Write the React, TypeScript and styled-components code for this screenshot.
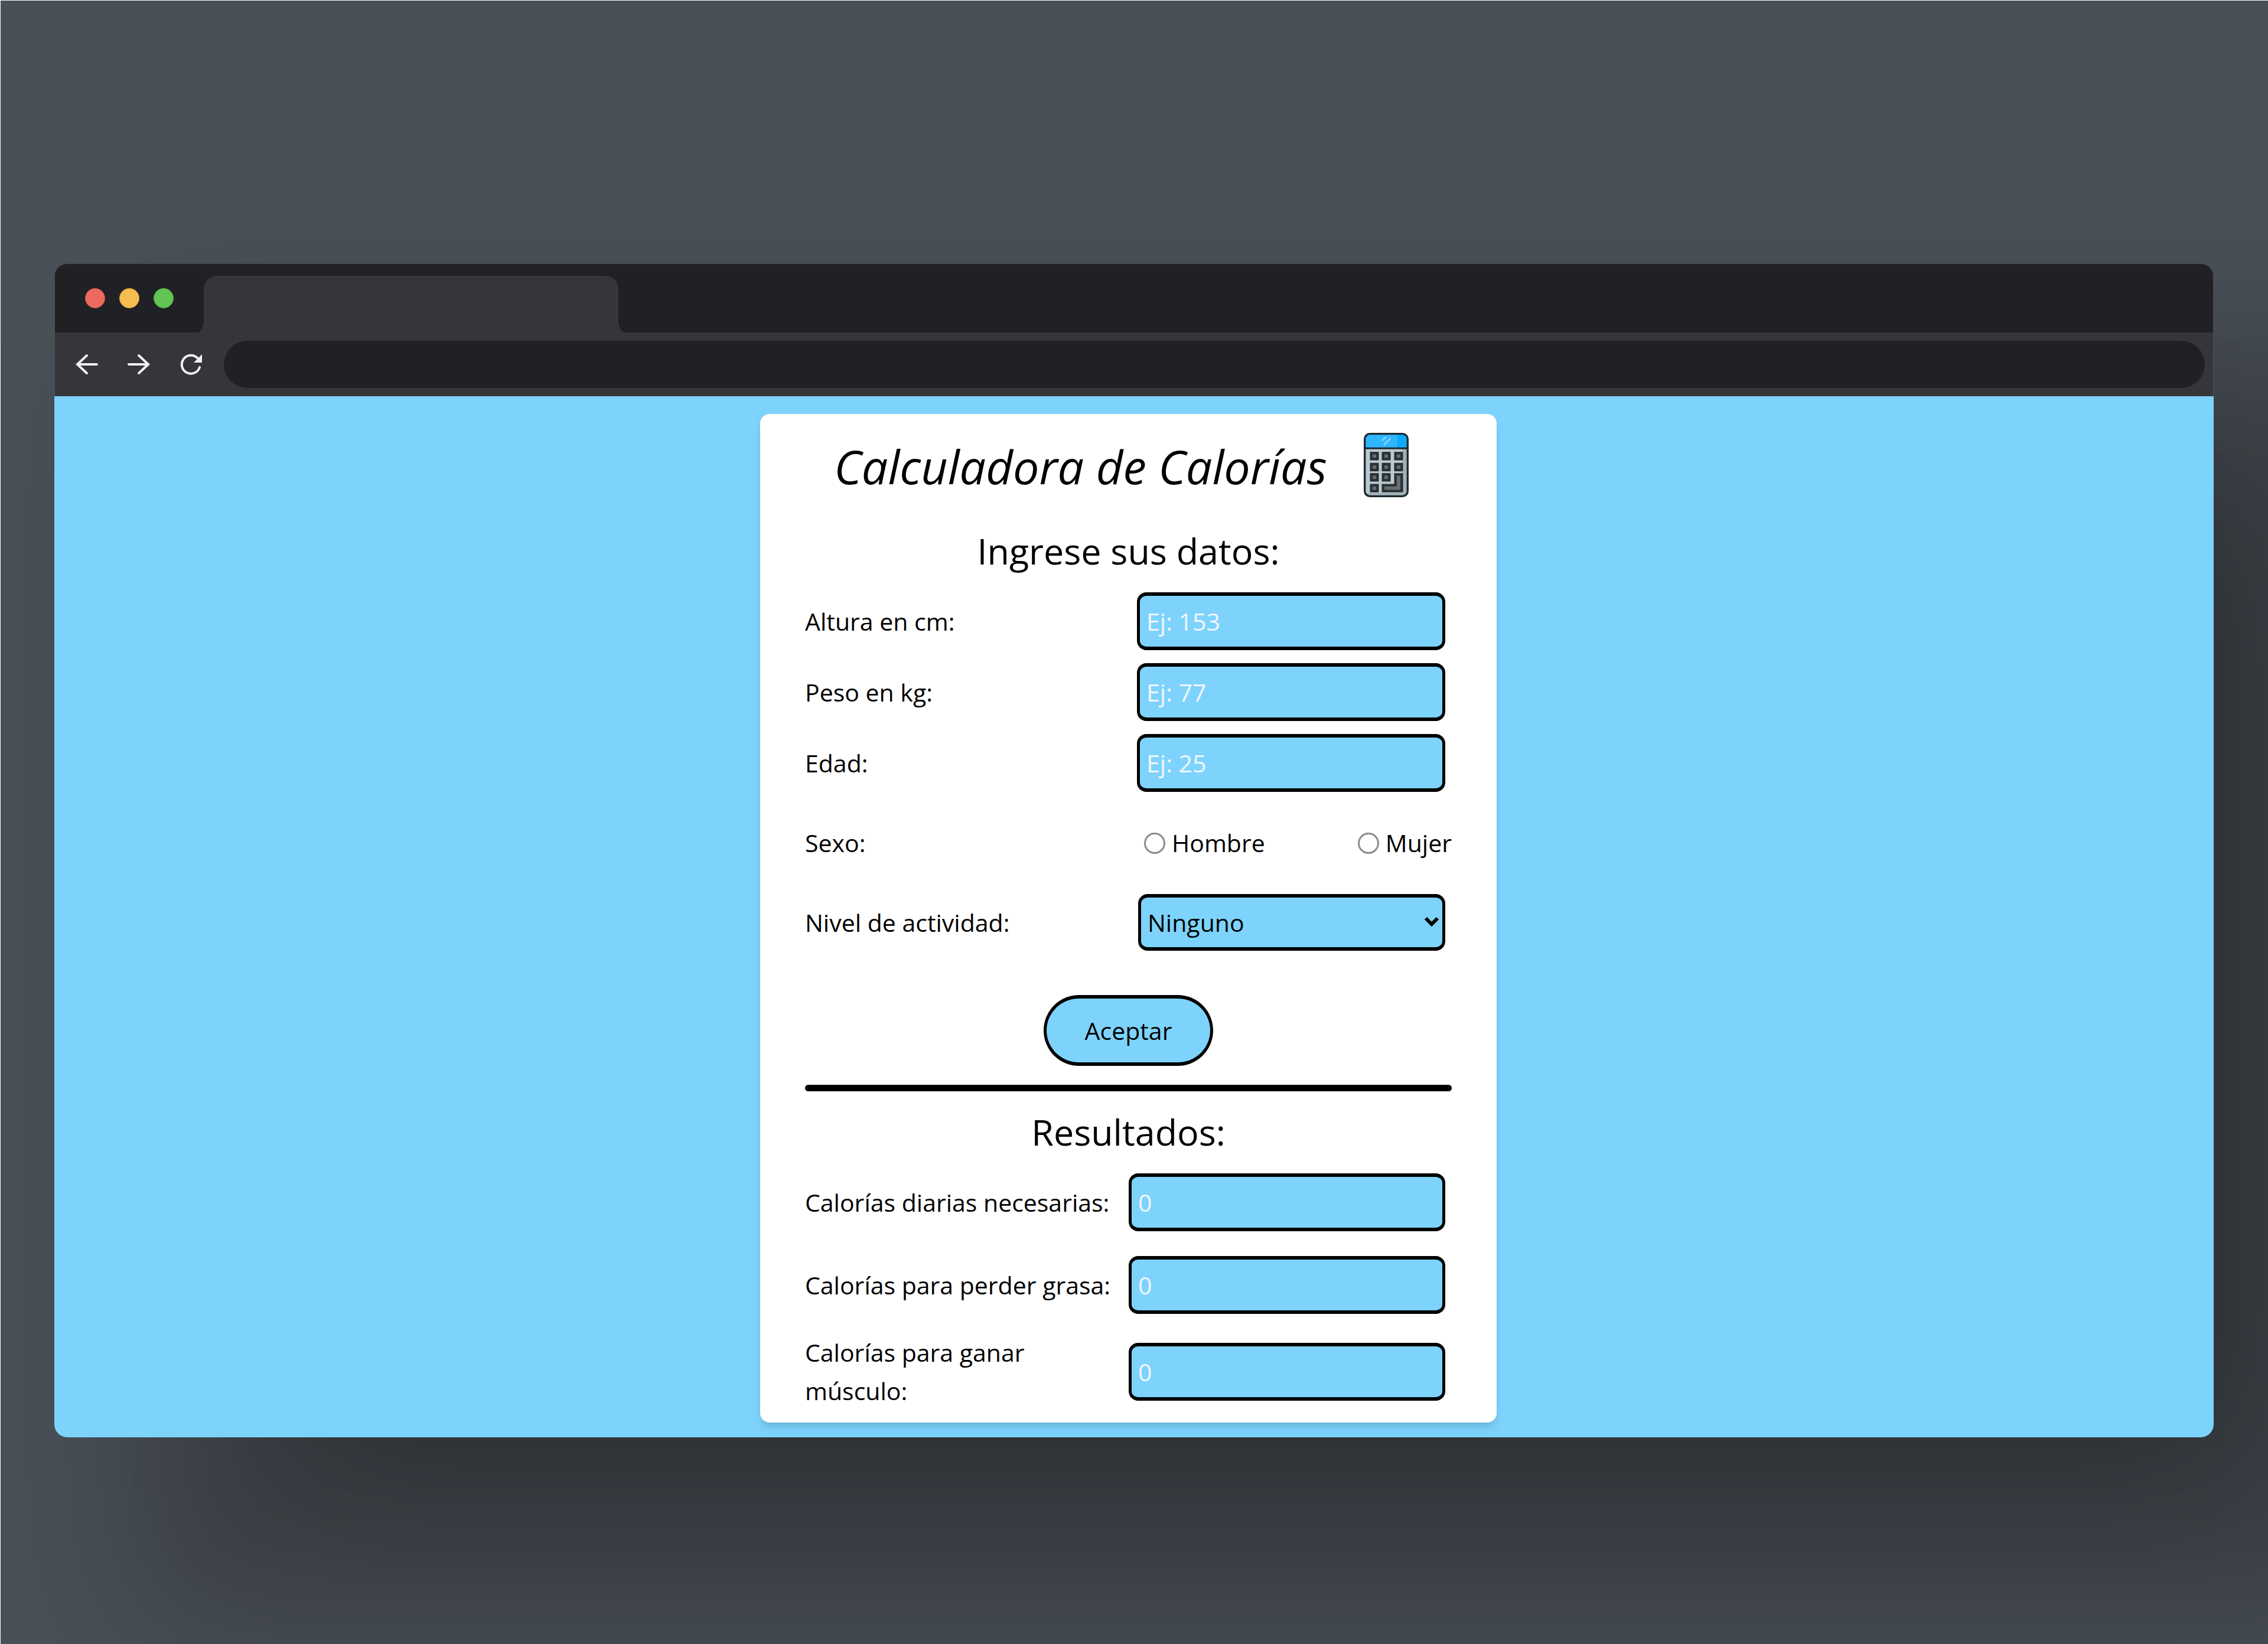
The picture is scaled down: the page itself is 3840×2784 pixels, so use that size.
import React, { useId } from "react";
import styled, { createGlobalStyle } from "styled-components";

const sky = "#7dd3fc";
const ink = "#202124";
const chrome = "#35363a";

const GlobalStyle = createGlobalStyle`
  *, *::before, *::after { box-sizing: border-box; }
  html { height: 100%; }
  body {
    margin: 0;
    min-height: 100%;
    background: #495057;
    color: #000;
    font-family: "Open Sans", "Noto Sans", sans-serif;
    font-size: 41px;
    line-height: 65px;
  }
`;

const Stage = styled.div`
  min-height: 100vh;
  display: flex;
  flex-direction: column;
  padding: 444px 92px 340px 91px;
  border: solid #fff;
  border-width: 1px 0 0 1px;
  overflow: hidden;
`;

const Browser = styled.div`
  border-radius: 22px;
  overflow: hidden;
  box-shadow:
    224px 230px 300px 100px rgba(0, 0, 0, 0.2),
    224px 230px 300px -170px rgba(0, 0, 0, 0.28);
`;

const TabStrip = styled.div`
  display: flex;
  align-items: flex-end;
  height: 118px;
  padding-left: 51px;
  background: ${ink};
  border: solid #4b4b4d;
  border-width: 2px 1px 0;
  border-radius: 22px 22px 0 0;
`;

const Lights = styled.div`
  display: flex;
  gap: 24px;
  align-self: center;
  margin-right: 51px;
`;

const Light = styled.span<{ $color: string; $edge: string }>`
  width: 34px;
  height: 34px;
  border-radius: 50%;
  background: ${(p) => p.$color};
  border: 1px solid ${(p) => p.$edge};
`;

const Tab = styled.div`
  position: relative;
  width: 702px;
  height: 96px;
  border-radius: 22px 22px 0 0;
  background: ${chrome};

  &::before,
  &::after {
    content: "";
    position: absolute;
    bottom: 0;
    width: 11px;
    height: 20px;
  }
  &::before {
    right: 100%;
    background: radial-gradient(ellipse 11px 20px at 0 0, transparent 98%, ${chrome});
  }
  &::after {
    left: 100%;
    background: radial-gradient(ellipse 11px 20px at 100% 0, transparent 98%, ${chrome});
  }
`;

const Toolbar = styled.div`
  display: flex;
  align-items: center;
  height: 108px;
  padding: 0 14px 0 33px;
  background: ${chrome};
  border: solid #505154;
  border-width: 0 1px;
`;

const NavButton = styled.button`
  display: flex;
  justify-content: center;
  align-items: center;
  width: 42px;
  height: 42px;
  margin-right: 46px;
  padding: 0;
  border: 0;
  background: none;
  color: #f1f1f2;
`;

const Address = styled.input`
  flex: 1;
  min-width: 0;
  height: 80px;
  margin-left: -11px;
  padding: 0 40px;
  border: 0;
  border-radius: 40px;
  background: ${ink};
  color: #fff;
  font: inherit;
`;

const Page = styled.main`
  display: flex;
  justify-content: center;
  padding: 30px 19px 25px 0;
  background: ${sky};
`;

const Card = styled.section`
  width: 1247px;
  padding: 0 76px 21px;
  border-radius: 16px;
  background: #fff;
  box-shadow: 0 11px 16px -3px rgba(0, 0, 0, 0.1), 0 5px 11px -4px rgba(0, 0, 0, 0.1);
`;

const Header = styled.header`
  display: flex;
  justify-content: center;
  align-items: center;
  gap: 62px;
  height: 172px;
  margin-bottom: 12px;
  padding-right: 24px;
`;

const Title = styled.h1`
  margin: 0;
  padding-top: 6px;
  font-size: 79px;
  font-style: italic;
  font-weight: 400;
  line-height: 108px;
`;

const Heading = styled.h2`
  margin: 0;
  font-size: 61px;
  font-weight: 400;
  line-height: 96px;
  text-align: center;
`;

const Fields = styled.div`
  display: flex;
  flex-direction: column;
  gap: 22px;
  padding-top: 22px;
`;

const Results = styled.div`
  display: flex;
  flex-direction: column;
  gap: 24px;
  padding-top: 13px;
`;

const Row = styled.div<{ $tall?: boolean }>`
  display: flex;
  justify-content: space-between;
  align-items: center;
  min-height: ${(p) => (p.$tall ? 116 : 96)}px;
`;

const SexRow = styled.fieldset`
  display: flex;
  justify-content: space-between;
  align-items: center;
  min-width: 0;
  margin: 0;
  padding: 32px 0;
  border: 0;
`;

const Label = styled.label`
  max-width: 530px;
`;

const TextBox = styled.input<{ $wide?: boolean }>`
  width: ${(p) => (p.$wide ? 536 : 522)}px;
  height: 98px;
  margin-right: 11px;
  padding: 0 11px;
  border: solid #000;
  border-width: 6px 5px;
  border-radius: 16px;
  background: ${sky};
  color: #000;
  font: inherit;

  &::placeholder {
    color: #f3f6fd;
    opacity: 1;
  }
`;

const SelectWrap = styled.div`
  position: relative;
  width: 520px;
  margin-right: 11px;

  svg {
    position: absolute;
    right: 10px;
    top: 38px;
    pointer-events: none;
  }
`;

const Select = styled.select`
  appearance: none;
  display: block;
  width: 100%;
  height: 96px;
  padding: 0 11px;
  border: solid #000;
  border-width: 6px 5px;
  border-radius: 16px;
  background: ${sky};
  color: #000;
  font: inherit;
`;

const Radios = styled.div`
  display: flex;
  justify-content: space-between;
  width: 521px;
`;

const RadioLabel = styled.label`
  display: flex;
  align-items: center;
  gap: 11px;
`;

const Radio = styled.input`
  appearance: none;
  width: 36px;
  height: 36px;
  margin: 0;
  border: 3px solid #8b8b8b;
  border-radius: 50%;
  background: #fff;

  &:checked {
    box-shadow: inset 0 0 0 6px #fff;
    background: #0075ff;
  }
`;

const Actions = styled.div`
  display: flex;
  justify-content: center;
  padding: 75px 0 32px;
`;

const Submit = styled.button`
  width: 287px;
  height: 120px;
  padding: 0;
  border: solid #000;
  border-width: 6px 5px;
  border-radius: 60px;
  background: ${sky};
  color: #000;
  font: inherit;
`;

const Rule = styled.hr`
  height: 11px;
  margin: 0 0 21px;
  border: 0;
  border-radius: 6px;
  background: #000;
`;

const Calculator = () => (
  <svg width="76" height="109" viewBox="0 0 228 327" aria-hidden="true">
    <defs>
      <clipPath id="calc-body">
        <rect x="5" y="5" width="218" height="317" rx="26" />
      </clipPath>
    </defs>
    <g clipPath="url(#calc-body)">
      <rect width="228" height="327" fill="#bcc8ce" />
      <rect x="196" width="32" height="327" fill="#a3b0b7" />
      <rect y="306" width="228" height="21" fill="#a3b0b7" />
      <rect width="228" height="78" fill="#2fb6ff" />
      <rect x="170" width="58" height="78" fill="#0daaff" />
      <rect y="74" width="228" height="9" fill="#1c2a30" />
    </g>
    <path d="M94 38L112 22M104 60L134 30" stroke="#84d5ff" strokeWidth="8" strokeLinecap="round" />
    <rect x="5" y="5" width="218" height="317" rx="26" fill="none" stroke="#1c2a30" strokeWidth="10" />
    <g fill="#6d6b6b" stroke="#263238" strokeWidth="13">
      {[[38, 103], [98, 103], [161, 103], [38, 159], [98, 159], [161, 159], [38, 211], [98, 211], [38, 266]].map(
        ([x, y]) => (
          <rect key={`${x}-${y}`} x={x} y={y} width="32" height="30" />
        )
      )}
      <path d="M161 211H193V296H98V266H161Z" />
    </g>
  </svg>
);

const Arrow = ({ flip = false }: { flip?: boolean }) => (
  <svg width="38" height="38" viewBox="0 0 38 38" fill="none" stroke="currentColor" strokeWidth="4" strokeLinecap="round" aria-hidden="true">
    <path d={flip ? "M2 19H35M19 4L35 19L19 34" : "M36 19H3M19 4L3 19L19 34"} />
  </svg>
);

const Reload = () => (
  <svg width="38" height="38" viewBox="0 0 38 38" fill="none" aria-hidden="true">
    <path d="M34 24A15.500 15.500 0 1 1 30 8" stroke="currentColor" strokeWidth="4" strokeLinecap="round" />
    <path d="M38 2V16H24Z" fill="currentColor" />
  </svg>
);

type FieldProps = { label: string; placeholder: string; result?: boolean };

const Field = ({ label, placeholder, result }: FieldProps) => {
  const id = useId();
  return (
    <Row $tall={result}>
      <Label htmlFor={id}>{label}</Label>
      <TextBox id={id} type="text" inputMode="numeric" placeholder={placeholder} readOnly={result} $wide={result} />
    </Row>
  );
};

export default function App() {
  return (
    <>
      <GlobalStyle />
      <Stage>
        <Browser>
          <TabStrip>
            <Lights>
              <Light $color="#ee6a5f" $edge="#ce5347" />
              <Light $color="#f5bd4f" $edge="#d6a243" />
              <Light $color="#61c454" $edge="#58a942" />
            </Lights>
            <Tab />
          </TabStrip>
          <Toolbar>
            <NavButton type="button" aria-label="Atrás">
              <Arrow />
            </NavButton>
            <NavButton type="button" aria-label="Adelante">
              <Arrow flip />
            </NavButton>
            <NavButton type="button" aria-label="Recargar">
              <Reload />
            </NavButton>
            <Address type="text" aria-label="Dirección" />
          </Toolbar>
          <Page>
            <Card>
              <Header>
                <Title>Calculadora de Calorías</Title>
                <Calculator />
              </Header>
              <form onSubmit={(e) => e.preventDefault()}>
                <Heading>Ingrese sus datos:</Heading>
                <Fields>
                  <Field label="Altura en cm:" placeholder="Ej: 153" />
                  <Field label="Peso en kg:" placeholder="Ej: 77" />
                  <Field label="Edad:" placeholder="Ej: 25" />
                  <SexRow aria-labelledby="sexo">
                    <span id="sexo">Sexo:</span>
                    <Radios>
                      <RadioLabel>
                        <Radio type="radio" name="sexo" value="hombre" />
                        Hombre
                      </RadioLabel>
                      <RadioLabel>
                        <Radio type="radio" name="sexo" value="mujer" />
                        Mujer
                      </RadioLabel>
                    </Radios>
                  </SexRow>
                  <Row>
                    <Label htmlFor="actividad">Nivel de actividad:</Label>
                    <SelectWrap>
                      <Select id="actividad">
                        <option>Ninguno</option>
                      </Select>
                      <svg width="26" height="18" viewBox="0 0 26 18" fill="none" aria-hidden="true">
                        <path d="M3 3L13 13L23 3" stroke="#000" strokeWidth="6" />
                      </svg>
                    </SelectWrap>
                  </Row>
                </Fields>
                <Actions>
                  <Submit type="submit">Aceptar</Submit>
                </Actions>
              </form>
              <Rule />
              <Heading>Resultados:</Heading>
              <Results>
                <Field label="Calorías diarias necesarias:" placeholder="0" result />
                <Field label="Calorías para perder grasa:" placeholder="0" result />
                <Field label="Calorías para ganar músculo:" placeholder="0" result />
              </Results>
            </Card>
          </Page>
        </Browser>
      </Stage>
    </>
  );
}
